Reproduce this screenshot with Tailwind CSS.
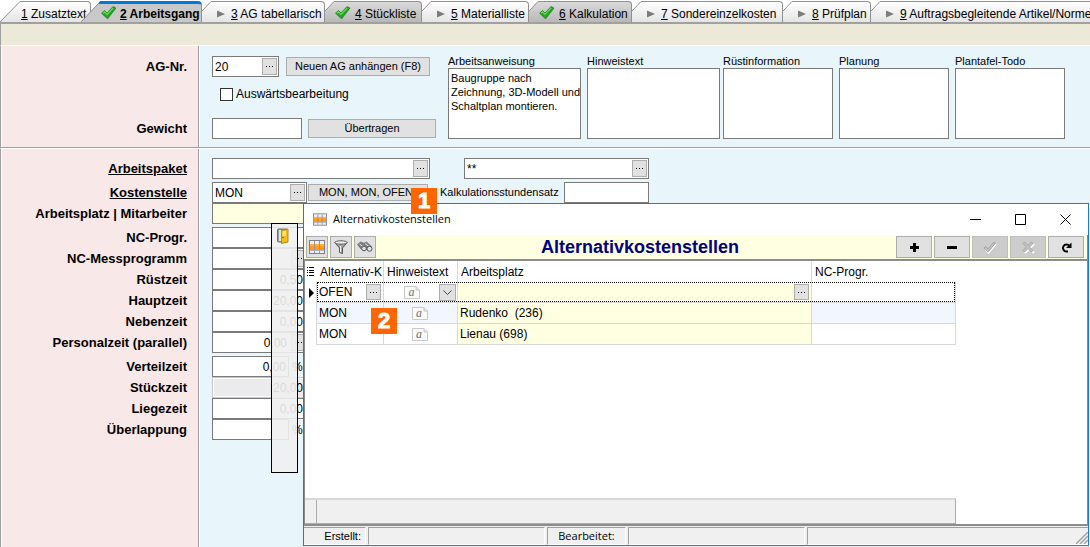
<!DOCTYPE html>
<html lang="de">
<head>
<meta charset="utf-8">
<title>Arbeitsgang – Alternativkostenstellen</title>
<script src="https://cdn.jsdelivr.net/npm/@tailwindcss/browser@4"></script>
</head>
<body class="relative flex h-screen flex-col overflow-hidden bg-white font-['Liberation_Sans',Arial,sans-serif] text-xs text-black">

<svg width="0" height="0" class="absolute" aria-hidden="true">
  <defs>
    <linearGradient id="tabLight" x1="0" y1="0" x2="0" y2="1"><stop offset="0" stop-color="#ffffff"/><stop offset="1" stop-color="#e4e4e4"/></linearGradient>
    <linearGradient id="tabDark" x1="0" y1="0" x2="0" y2="1"><stop offset="0" stop-color="#dadada"/><stop offset="1" stop-color="#b8b8b8"/></linearGradient>
    <symbol id="check" viewBox="0 0 16 14"><path d="M1.5 8.500 4 5.600 6.600 8 12.600 1.200 15.300 2.600 7 13.500z" fill="#8a8f8a" opacity=".6"/><path d="M.6 7.200 3.600 4.500 6 7 12 .6 14.900 2 6.400 12.600z" fill="#22a722" stroke="#178417" stroke-width=".8"/><path d="M2 7.200 3.500 5.800 6 8.400 12.200 1.800" fill="none" stroke="#6fdc5c" stroke-width="1.200"/></symbol>
    <symbol id="tri" viewBox="0 0 8 8"><path d="M0 .5 8 4 0 7.500z" fill="#7c7c7c"/></symbol>
    <symbol id="grid" viewBox="0 0 16 14"><rect x=".5" y=".5" width="15" height="13" fill="#f0f0f6" stroke="#80808c"/><rect x="1" y="4" width="14" height="6" fill="#ff9c12"/><path d="M1 5h14" stroke="#ffc766"/><path d="M5.500 1v12M10.500 1v12" stroke="#9a90a0"/><path d="M1 10.500h14" stroke="#b0b0bc"/></symbol>
    <symbol id="note" viewBox="0 0 16 13"><path d="M.5.500h11.500l3.500 3.500v8.500H.5z" fill="#fafafa" stroke="#c8c8c8"/><path d="M12 .5v3.500h3.500" fill="#e4e4e4" stroke="#c8c8c8"/></symbol>
  </defs>
</svg>

<!-- Registerkarten -->
<nav class="flex h-6 shrink-0 items-end overflow-hidden border-b-2 border-[#a0a0a0] pt-px whitespace-nowrap">
  <button class="flex h-[21px] w-[91px] shrink-0">
    <svg class="h-full w-[21px] shrink-0" viewBox="0 0 21 21"><path d="M0 21 20 .5h1V21z" fill="url(#tabLight)"/><path d="M0 21 20 .5h1" fill="none" stroke="#909090"/></svg>
    <span class="flex h-full grow items-center rounded-tr border-t border-r border-[#909090] bg-linear-to-b from-white to-[#e4e4e4] pt-1"><span><u>1</u> Zusatztext</span></span>
  </button>
  <button class="z-10 -ml-[10px] flex h-[21px] w-[121px] shrink-0 font-bold">
    <svg class="h-full w-[20px] shrink-0" viewBox="0 0 20 21"><path d="M0 21 19 1h1v20z" fill="#c8c8c8"/><path d="M0 21 17 3" fill="none" stroke="#909090"/><path d="M17 3 19 0h1v3z" fill="#0078d7"/></svg>
    <span class="flex h-full grow items-center gap-[3px] rounded-tr border-t-3 border-r border-t-[#0078d7] border-r-[#909090] bg-[#c8c8c8]"><svg class="h-[14px] w-4"><use href="#check"/></svg><span class="pt-[2px]"><u>2</u> Arbeitsgang</span></span>
  </button>
  <button class="flex h-[21px] w-[123px] shrink-0">
    <svg class="h-full w-[10px] shrink-0" viewBox="0 0 10 21"><path d="M0 10 9 .5h1V21H0z" fill="url(#tabLight)"/><path d="M0 10 9 .5h1" fill="none" stroke="#909090"/></svg>
    <span class="flex h-full grow items-center gap-1.5 rounded-tr border-t border-r border-[#909090] bg-linear-to-b from-white to-[#e4e4e4] pt-1 pl-[5px]"><svg class="size-2"><use href="#tri"/></svg><span><u>3</u> AG tabellarisch</span></span>
  </button>
  <button class="flex h-[21px] w-[97px] shrink-0">
    <svg class="h-full w-[10px] shrink-0" viewBox="0 0 10 21"><path d="M0 10 9 .5h1V21H0z" fill="url(#tabDark)"/><path d="M0 10 9 .5h1" fill="none" stroke="#909090"/></svg>
    <span class="flex h-full grow items-center gap-1 rounded-tr border-t border-r border-[#909090] bg-linear-to-b from-[#dadada] to-[#b8b8b8] pt-[2px]"><svg class="h-[14px] w-4"><use href="#check"/></svg><span class="pt-[2px]"><u>4</u> Stückliste</span></span>
  </button>
  <button class="flex h-[21px] w-[107px] shrink-0">
    <svg class="h-full w-[10px] shrink-0" viewBox="0 0 10 21"><path d="M0 10 9 .5h1V21H0z" fill="url(#tabLight)"/><path d="M0 10 9 .5h1" fill="none" stroke="#909090"/></svg>
    <span class="flex h-full grow items-center gap-1.5 rounded-tr border-t border-r border-[#909090] bg-linear-to-b from-white to-[#e4e4e4] pt-1 pl-[5px]"><svg class="size-2"><use href="#tri"/></svg><span><u>5</u> Materialliste</span></span>
  </button>
  <button class="flex h-[21px] w-[103px] shrink-0">
    <svg class="h-full w-[10px] shrink-0" viewBox="0 0 10 21"><path d="M0 10 9 .5h1V21H0z" fill="url(#tabDark)"/><path d="M0 10 9 .5h1" fill="none" stroke="#909090"/></svg>
    <span class="flex h-full grow items-center gap-1 rounded-tr border-t border-r border-[#909090] bg-linear-to-b from-[#dadada] to-[#b8b8b8] pt-[2px]"><svg class="h-[14px] w-4"><use href="#check"/></svg><span class="pt-[2px]"><u>6</u> Kalkulation</span></span>
  </button>
  <button class="flex h-[21px] w-[151px] shrink-0">
    <svg class="h-full w-[10px] shrink-0" viewBox="0 0 10 21"><path d="M0 10 9 .5h1V21H0z" fill="url(#tabLight)"/><path d="M0 10 9 .5h1" fill="none" stroke="#909090"/></svg>
    <span class="flex h-full grow items-center gap-1.5 rounded-tr border-t border-r border-[#909090] bg-linear-to-b from-white to-[#e4e4e4] pt-1 pl-[5px]"><svg class="size-2"><use href="#tri"/></svg><span><u>7</u> Sondereinzelkosten</span></span>
  </button>
  <button class="flex h-[21px] w-[88px] shrink-0">
    <svg class="h-full w-[10px] shrink-0" viewBox="0 0 10 21"><path d="M0 10 9 .5h1V21H0z" fill="url(#tabLight)"/><path d="M0 10 9 .5h1" fill="none" stroke="#909090"/></svg>
    <span class="flex h-full grow items-center gap-1.5 rounded-tr border-t border-r border-[#909090] bg-linear-to-b from-white to-[#e4e4e4] pt-1 pl-[5px]"><svg class="size-2"><use href="#tri"/></svg><span><u>8</u> Prüfplan</span></span>
  </button>
  <button class="flex h-[21px] shrink-0">
    <svg class="h-full w-[10px] shrink-0" viewBox="0 0 10 21"><path d="M0 10 9 .5h1V21H0z" fill="url(#tabLight)"/><path d="M0 10 9 .5h1" fill="none" stroke="#909090"/></svg>
    <span class="flex h-full items-center gap-1.5 border-t border-[#909090] bg-linear-to-b from-white to-[#e4e4e4] pt-1 pr-2 pl-[5px]"><svg class="size-2"><use href="#tri"/></svg><span><u>9</u> Auftragsbegleitende Artikel/Normen</span></span>
  </button>
</nav>

<div class="h-[22px] shrink-0 border-b border-l border-b-white border-l-[#a0a0a0] bg-[#ece9d8]"></div>

<!-- Kopfdaten -->
<section class="flex h-[102px] shrink-0 border-b border-l border-[#a0a0a0]">
  <div class="flex w-[198px] shrink-0 flex-col border-r border-l border-r-[#a0a0a0] border-l-white bg-[#f8e8e8] pt-[10px] pr-[11px] text-right text-[13px] font-bold">
    <label for="ag" class="h-[21px] leading-[21px]">AG-Nr.</label>
    <label for="gew" class="mt-[41px] h-[21px] leading-[21px]">Gewicht</label>
  </div>
  <div class="flex min-w-0 grow border-l border-white bg-[#e8f5fa] pt-[10px] pl-3">
    <div class="w-[236px] shrink-0">
      <div class="flex items-center gap-[7px]">
        <div class="flex h-[21px] w-[67px] items-center border border-[#7a7a7a] bg-white pr-px"><input id="ag" value="20" class="h-full min-w-0 grow pl-[2px] outline-none"><button aria-label="AG wählen" class="flex h-[17px] w-[15px] shrink-0 items-center justify-center gap-px border border-[#adadad] bg-[#e1e1e1]"><i class="size-px bg-black"></i><i class="mx-px size-px bg-black"></i><i class="size-px bg-black"></i></button></div>
        <button class="h-[19px] w-36 border border-[#adadad] bg-[#e1e1e1] text-[11px]">Neuen AG anhängen (F8)</button>
      </div>
      <label class="mt-[9px] ml-2 flex h-4 items-center gap-[3px]"><input type="checkbox" class="size-[13px] appearance-none border border-[#333] bg-white">Auswärtsbearbeitung</label>
      <div class="mt-4 flex items-center gap-[6px]">
        <input id="gew" class="h-[21px] w-[90px] border border-[#7a7a7a] bg-white px-[2px] outline-none">
        <button class="h-[19px] w-32 border border-[#adadad] bg-[#e1e1e1] text-[11px]">Übertragen</button>
      </div>
    </div>
    <div class="-mt-[2px] flex gap-[6px] text-[11px] leading-[14px]">
      <div class="flex w-[133px] flex-col"><label for="t1">Arbeitsanweisung</label><textarea id="t1" class="h-[71px] resize-none overflow-hidden border border-[#7a7a7a] bg-white py-[2px] pl-[2px] whitespace-pre outline-none">Baugruppe nach
Zeichnung, 3D-Modell und
Schaltplan montieren.</textarea></div>
      <div class="flex w-[133px] flex-col"><label for="t2">Hinweistext</label><textarea id="t2" class="h-[71px] resize-none border border-[#7a7a7a] bg-white outline-none"></textarea></div>
      <div class="-ml-[3px] flex w-[110px] flex-col"><label for="t3">Rüstinformation</label><textarea id="t3" class="h-[71px] resize-none border border-[#7a7a7a] bg-white outline-none"></textarea></div>
      <div class="flex w-[110px] flex-col"><label for="t4">Planung</label><textarea id="t4" class="h-[71px] resize-none border border-[#7a7a7a] bg-white outline-none"></textarea></div>
      <div class="flex w-[110px] flex-col"><label for="t5">Plantafel-Todo</label><textarea id="t5" class="h-[71px] resize-none border border-[#7a7a7a] bg-white outline-none"></textarea></div>
    </div>
  </div>
</section>

<!-- Detaildaten -->
<section class="flex min-h-0 grow border-t border-l border-t-white border-l-[#a0a0a0]">
  <div class="flex w-[198px] shrink-0 flex-col border-r border-l border-r-[#a0a0a0] border-l-white bg-[#f8e8e8] pt-[9px] pr-[11px] text-right text-[13px] leading-[21px] font-bold">
    <label for="f1" class="h-[21px] underline">Arbeitspaket</label>
    <label for="f2" class="mt-[3px] h-[21px] underline">Kostenstelle</label>
    <label for="f3" class="h-[21px]">Arbeitsplatz | Mitarbeiter</label>
    <label for="f4" class="mt-[3px] h-[21px]">NC-Progr.</label>
    <label for="f5" class="h-[21px]">NC-Messprogramm</label>
    <label for="f6" class="h-[21px]">Rüstzeit</label>
    <label for="f7" class="h-[21px]">Hauptzeit</label>
    <label for="f8" class="h-[21px]">Nebenzeit</label>
    <label for="f9" class="h-[21px]">Personalzeit (parallel)</label>
    <label for="f10" class="mt-[3px] h-[21px]">Verteilzeit</label>
    <label for="f11" class="h-[21px]">Stückzeit</label>
    <label for="f12" class="h-[21px]">Liegezeit</label>
    <label for="f13" class="h-[21px]">Überlappung</label>
  </div>
  <div class="flex min-w-0 grow flex-col border-l border-white bg-[#e8f5fa] pt-[9px] pl-3">
    <div class="flex h-[21px]">
      <div class="flex w-[218px] items-center border border-[#7a7a7a] bg-white pr-px"><input id="f1" class="h-full min-w-0 grow pl-[2px] outline-none"><button aria-label="Arbeitspaket wählen" class="flex h-[17px] w-[15px] shrink-0 items-center justify-center gap-px border border-[#adadad] bg-[#e1e1e1]"><i class="size-px bg-black"></i><i class="mx-px size-px bg-black"></i><i class="size-px bg-black"></i></button></div>
      <div class="ml-[34px] flex w-[185px] items-center border border-[#7a7a7a] bg-white pr-px"><input aria-label="Filter" value="**" class="h-full min-w-0 grow pl-[2px] outline-none"><button aria-label="Filter wählen" class="flex h-[17px] w-[15px] shrink-0 items-center justify-center gap-px border border-[#adadad] bg-[#e1e1e1]"><i class="size-px bg-black"></i><i class="mx-px size-px bg-black"></i><i class="size-px bg-black"></i></button></div>
    </div>
    <div class="mt-[3px] flex h-[21px] items-center text-[11px]">
      <div class="flex h-full w-[95px] items-center border border-[#7a7a7a] bg-white pr-px text-xs"><input id="f2" value="MON" class="h-full min-w-0 grow pl-[2px] outline-none"><button aria-label="Kostenstelle wählen" class="flex h-[17px] w-[15px] shrink-0 items-center justify-center gap-px border border-[#adadad] bg-[#e1e1e1]"><i class="size-px bg-black"></i><i class="mx-px size-px bg-black"></i><i class="size-px bg-black"></i></button></div>
      <button class="ml-px h-[17px] w-[120px] border border-[#adadad] bg-[#e1e1e1] pr-1">MON, MON, OFEN</button>
      <label for="ks" class="ml-3 w-[124px]">Kalkulationsstundensatz</label>
      <input id="ks" class="h-full w-[85px] border border-[#7a7a7a] bg-white px-[2px] outline-none">
    </div>
    <input id="f3" class="h-[21px] w-[220px] border border-[#7a7a7a] bg-[#ffffe1] outline-none">
    <input id="f4" class="mt-[3px] h-[21px] w-[180px] border border-[#7a7a7a] bg-white outline-none">
    <div class="flex h-[21px] w-[96px] items-center border border-[#7a7a7a] bg-white pr-px"><input id="f5" class="h-full min-w-0 grow outline-none"><button aria-label="NC-Messprogramm wählen" class="flex h-[17px] w-[15px] shrink-0 items-center justify-center gap-px border border-[#adadad] bg-[#e1e1e1]"><i class="size-px bg-black"></i><i class="mx-px size-px bg-black"></i><i class="size-px bg-black"></i></button></div>
    <input id="f6" value="0,50" class="h-[21px] w-[96px] border border-[#7a7a7a] bg-white pr-1 text-right outline-none">
    <input id="f7" value="20,00" class="h-[21px] w-[96px] border border-[#7a7a7a] bg-white pr-1 text-right outline-none">
    <input id="f8" value="0,00" class="h-[21px] w-[96px] border border-[#7a7a7a] bg-white pr-1 text-right outline-none">
    <div class="flex h-[21px] w-[96px] items-center border border-[#7a7a7a] bg-white pr-px"><input id="f9" value="0,00" class="h-full min-w-0 grow pr-1 text-right outline-none"><button aria-label="Personalzeit wählen" class="flex h-[17px] w-[15px] shrink-0 items-center justify-center gap-px border border-[#adadad] bg-[#e1e1e1]"><i class="size-px bg-black"></i><i class="mx-px size-px bg-black"></i><i class="size-px bg-black"></i></button></div>
    <div class="mt-[3px] flex h-[21px] items-center gap-[3px]"><input id="f10" value="0,00" class="h-full w-[77px] border border-[#7a7a7a] bg-white pr-[2px] text-right outline-none"><span>%</span></div>
    <input id="f11" value="20,00" readonly class="h-[21px] w-[96px] border border-[#c8c8c8] bg-[#ebebed] pr-1 text-right ring-1 ring-white outline-none ring-inset">
    <input id="f12" value="0,00" class="h-[21px] w-[96px] border border-[#7a7a7a] bg-white pr-1 text-right outline-none">
    <div class="flex h-[21px] items-center gap-[3px]"><input id="f13" class="h-full w-[77px] border border-[#7a7a7a] bg-white outline-none"><span>%</span></div>
  </div>
</section>

<!-- Schwebende Leiste -->
<div class="absolute top-[223px] left-[271px] flex h-[250px] w-[27px] justify-center border border-black bg-[#f0f0f0]/90 pt-1 pr-1">
  <svg class="h-4 w-3" viewBox="0 0 12 16"><rect x=".5" y="1" width="10" height="13" rx="1" fill="#8fa39a" stroke="#66756d"/><path d="M2 2h3v11H2z" fill="#d8ece4"/><path d="M4.500 2.500 11 1v13l-6.500 1.500z" fill="#f2bd16" stroke="#a87c0a" stroke-width=".8"/><path d="M5.500 3.500 9 2.700v5l-3.500.8z" fill="#ffe372"/><circle cx="6" cy="9.500" r=".8" fill="#765400"/></svg>
</div>

<!-- Dialogfenster -->
<div role="dialog" aria-labelledby="dlg" class="absolute top-[203px] right-px bottom-px left-[303px] flex flex-col border border-[#1a7fd4] bg-white">
  <header class="flex h-[31px] shrink-0 items-center pl-[9px]">
    <svg class="h-[13px] w-[14px]"><use href="#grid"/></svg>
    <span class="ml-[6px] grow font-['Open_Sans',sans-serif] text-[11px]">Alternativkostenstellen</span>
    <button aria-label="Minimieren" class="flex h-full w-[45px] items-center justify-center"><svg width="11" height="11" viewBox="0 0 11 11"><path d="M0 5.500h11" stroke="#000"/></svg></button>
    <button aria-label="Maximieren" class="flex h-full w-[45px] items-center justify-center"><svg width="11" height="11" viewBox="0 0 11 11"><path d="M.5.500h10v10H.5z" fill="none" stroke="#000"/></svg></button>
    <button aria-label="Schließen" class="flex h-full w-[45px] items-center justify-center"><svg width="11" height="11" viewBox="0 0 11 11"><path d="m.5.500 10 10m0-10-10 10" stroke="#000"/></svg></button>
  </header>

  <div class="flex h-[26px] shrink-0 items-start border-r border-b-2 border-[#8c8c8c] bg-[#ffffe1] pt-px pr-[3px] pl-[2px]">
    <div class="flex gap-[2px]">
      <button aria-label="Tabelle" class="flex size-[22px] items-center justify-center border border-[#adadad] bg-[#e1e1e1]"><svg class="h-[14px] w-4"><use href="#grid"/></svg></button>
      <button aria-label="Filter" class="flex size-[22px] items-center justify-center border border-[#adadad] bg-[#e1e1e1]"><svg width="14" height="14" viewBox="0 0 14 14"><path d="M.8 2.500 5.500 8v4.500l3 1V8l4.700-5.500z" fill="#a5a5a5" stroke="#5a5a5a"/><ellipse cx="7" cy="2.500" rx="6.200" ry="1.700" fill="#eee" stroke="#5a5a5a"/><path d="M6.500 6v6" stroke="#f4f4f4"/></svg></button>
      <button aria-label="Suchen" class="flex size-[22px] items-center justify-center border border-[#adadad] bg-[#e1e1e1]"><svg width="16" height="12" viewBox="0 0 16 12"><path d="M.5 3.500 3.500 1 7 2.200 9.500 1l5 4.500-1 3H10L7 8 4 8z" fill="#808080" stroke="#5c5c5c" stroke-width=".6"/><path d="m2.500 3 4 3M8 2.500l4 3" stroke="#e4e4e4"/><circle cx="7" cy="7.500" r="2.300" fill="#d6e8f2" stroke="#555"/><circle cx="12.500" cy="7.800" r="2.500" fill="#d6e8f2" stroke="#555"/></svg></button>
    </div>
    <h1 id="dlg" class="grow pl-2 text-center text-[18px] leading-[22px] font-bold text-[#000080]">Alternativkostenstellen</h1>
    <div class="flex gap-[2px]">
      <button aria-label="Hinzufügen" class="flex h-[22px] w-9 items-center justify-center border border-[#adadad] bg-[#e1e1e1]"><svg width="9" height="9" viewBox="0 0 9 9"><path d="M4.500 0v9M0 4.500h9" stroke="#000" stroke-width="3"/></svg></button>
      <button aria-label="Löschen" class="flex h-[22px] w-9 items-center justify-center border border-[#adadad] bg-[#e1e1e1]"><svg width="10" height="9" viewBox="0 0 10 9"><path d="M0 4.500h10" stroke="#000" stroke-width="3"/></svg></button>
      <button aria-label="Übernehmen" disabled class="flex h-[22px] w-9 items-center justify-center border border-[#bfbfbf] bg-[#ccc]"><svg width="14" height="13" viewBox="0 0 14 13"><path d="m2 8 3.500 4L13 3" fill="none" stroke="#fff" stroke-width="1.500"/><path d="m.8 7 2-1.500L5 8l6-7 1.500 1-7.500 9z" fill="#c4c4c4" stroke="#9d9d9d" stroke-width=".9"/></svg></button>
      <button aria-label="Verwerfen" disabled class="flex h-[22px] w-9 items-center justify-center border border-[#bfbfbf] bg-[#ccc]"><svg width="13" height="13" viewBox="0 0 13 13"><path d="m3 3 9 9m0-9-9 9" stroke="#fff" stroke-width="2"/><path d="m1 2.500 1.500-1.500L6 4.500 9.500 1 11 2.500 7.500 6 11 9.500 9.500 11 6 7.500 2.500 11 1 9.500 4.500 6z" fill="#c4c4c4" stroke="#9d9d9d" stroke-width=".9"/></svg></button>
      <button aria-label="Aktualisieren" class="flex h-[22px] w-9 items-center justify-center border border-[#adadad] bg-[#e1e1e1]"><svg width="11" height="11" viewBox="0 0 11 11"><path d="M7 9.500H5.500a3.500 3.500 0 1 1 3-5.300" fill="none" stroke="#000" stroke-width="2"/><path d="M10.500.500v5.500H5z" fill="#000"/></svg></button>
    </div>
  </div>

  <div class="flex min-h-0 grow flex-col justify-between border-r border-b-2 border-l border-[#8c8c8c]">
    <table class="w-[651px] table-fixed border-separate border-spacing-0 text-left">
      <colgroup><col class="w-3"><col class="w-[67px]"><col class="w-[74px]"><col class="w-[354px]"><col class="w-36"></colgroup>
      <thead>
        <tr class="h-[21px] whitespace-nowrap">
          <th class="p-0" aria-label="Zeilenmarkierung"><svg class="ml-[2px]" width="7" height="9" viewBox="0 0 7 9"><path d="M2 .5h5M2 3.500h5M2 5.500h5M2 8.500h5M0 .5h1M0 3.500h1M0 5.500h1M0 8.500h1" stroke="#000"/></svg></th>
          <th class="overflow-hidden border-r border-[#d8d8d8] p-0 pl-[3px] font-normal">Alternativ-K</th>
          <th class="border-r border-[#d8d8d8] p-0 pl-[3px] font-normal">Hinweistext</th>
          <th class="border-r border-[#d8d8d8] p-0 pl-[3px] font-normal">Arbeitsplatz</th>
          <th class="p-0 pl-[3px] font-normal">NC-Progr.</th>
        </tr>
      </thead>
      <tbody>
        <tr class="h-[21px]">
          <td class="border-r border-[#d8d8d8] p-0"><svg class="ml-[4px]" width="5" height="10" viewBox="0 0 5 10"><path d="M0 0l5 5-5 5z" fill="#000"/></svg></td>
          <td class="border-r border-b border-[#d8d8d8] p-0"><div class="flex h-5 items-center border-y border-l border-dotted border-black pr-[2px]"><input aria-label="Alternativ-Kostenstelle" value="OFEN" class="h-full min-w-0 grow pl-px outline-none"><button aria-label="Kostenstelle wählen" class="flex h-4 w-[15px] shrink-0 items-center justify-center gap-px border border-[#adadad] bg-[#e1e1e1]"><i class="size-px bg-black"></i><i class="mx-px size-px bg-black"></i><i class="size-px bg-black"></i></button></div></td>
          <td class="border-r border-b border-[#d8d8d8] p-0"><div class="flex h-5 items-center justify-end border-y border-dotted border-black pr-px"><span class="relative mr-[19px] flex h-[13px] w-4 items-center justify-center font-['Liberation_Serif',serif] text-[12px] leading-none text-[#707070] italic"><svg class="absolute inset-0 h-[13px] w-4"><use href="#note"/></svg><span class="relative pr-px">a</span></span><button aria-label="Hinweistext öffnen" class="flex h-[17px] w-[17px] items-center justify-center border border-[#adadad] bg-[#e1e1e1]"><svg width="9" height="5" viewBox="0 0 9 5"><path d="m.5.500 4 4 4-4" fill="none" stroke="#444"/></svg></button></div></td>
          <td class="border-r border-b border-[#d8d8d8] bg-[#ffffe1] p-0"><div class="flex h-5 items-center border-y border-dotted border-black pr-[2px]"><input aria-label="Arbeitsplatz" class="h-full min-w-0 grow pl-[2px] outline-none"><button aria-label="Arbeitsplatz wählen" class="flex h-4 w-[15px] shrink-0 items-center justify-center gap-px border border-[#adadad] bg-[#e1e1e1]"><i class="size-px bg-black"></i><i class="mx-px size-px bg-black"></i><i class="size-px bg-black"></i></button></div></td>
          <td class="border-r border-b border-[#d8d8d8] p-0"><div class="h-5 border-y border-r border-dotted border-black"></div></td>
        </tr>
        <tr class="h-[21px] bg-[#f2f7ff]">
          <td class="border-r border-[#d8d8d8] bg-white p-0"></td>
          <td class="border-r border-b border-[#d8d8d8] p-0 pl-[2px]">MON</td>
          <td class="border-r border-b border-[#d8d8d8] p-0 pr-[2px]"><span class="relative mx-auto flex h-[13px] w-4 items-center justify-center font-['Liberation_Serif',serif] text-[12px] leading-none text-[#707070] italic"><svg class="absolute inset-0 h-[13px] w-4"><use href="#note"/></svg><span class="relative pr-px">a</span></span></td>
          <td class="border-r border-b border-[#d8d8d8] bg-[#ffffe1] p-0 pl-[2px] whitespace-pre">Rudenko  (236)</td>
          <td class="border-r border-b border-[#d8d8d8] p-0"></td>
        </tr>
        <tr class="h-[21px]">
          <td class="border-r border-[#d8d8d8] p-0"></td>
          <td class="border-r border-b border-[#d8d8d8] p-0 pl-[2px]">MON</td>
          <td class="border-r border-b border-[#d8d8d8] p-0 pr-[2px]"><span class="relative mx-auto flex h-[13px] w-4 items-center justify-center font-['Liberation_Serif',serif] text-[12px] leading-none text-[#707070] italic"><svg class="absolute inset-0 h-[13px] w-4"><use href="#note"/></svg><span class="relative pr-px">a</span></span></td>
          <td class="border-r border-b border-[#d8d8d8] bg-[#ffffe1] p-0 pl-[2px]">Lienau (698)</td>
          <td class="border-r border-b border-[#d8d8d8] p-0"></td>
        </tr>
      </tbody>
    </table>
    <div class="flex h-[26px] w-[651px] border-t-2 border-r border-b border-t-[#d8d8dc] border-r-[#adadad] border-b-[#adadad] bg-[#f0f0f0]"><div class="w-3 border-r border-[#adadad]"></div></div>
  </div>

  <footer class="flex h-[19px] shrink-0 gap-[2px] bg-[#f0f0f0] pt-px text-[11px] leading-4">
    <div class="w-[62px] shrink-0 border-t border-r border-b border-t-[#a0a0a0] border-r-white border-b-white pr-1 text-right">Erstellt:</div>
    <div class="w-[177px] shrink-0 border border-t-[#a0a0a0] border-r-white border-b-white border-l-[#a0a0a0]"></div>
    <div class="w-[79px] shrink-0 border border-t-[#a0a0a0] border-r-white border-b-white border-l-[#a0a0a0] text-center font-['Open_Sans',sans-serif]">Bearbeitet:</div>
    <div class="w-[177px] shrink-0 border border-t-[#a0a0a0] border-r-white border-b-white border-l-[#a0a0a0]"></div>
    <div class="flex grow items-end justify-end border border-t-[#a0a0a0] border-r-0 border-b-white border-l-[#a0a0a0]"><svg width="12" height="12" viewBox="0 0 12 12"><path d="M0 12 12 0M4 12l8-8M8 12l4-4" stroke="#a0a0a0" stroke-width="1.400"/></svg></div>
  </footer>
</div>

<!-- Hinweismarken -->
<span class="absolute top-[188px] left-[411px] flex size-[26px] items-center justify-center bg-[#ff6600] text-[22px] leading-none font-bold text-white [-webkit-text-stroke:1px_white]">1</span>
<span class="absolute top-[308px] left-[371px] flex size-[26px] items-center justify-center bg-[#ff6600] text-[22px] leading-none font-bold text-white [-webkit-text-stroke:1px_white]">2</span>
</body>
</html>
